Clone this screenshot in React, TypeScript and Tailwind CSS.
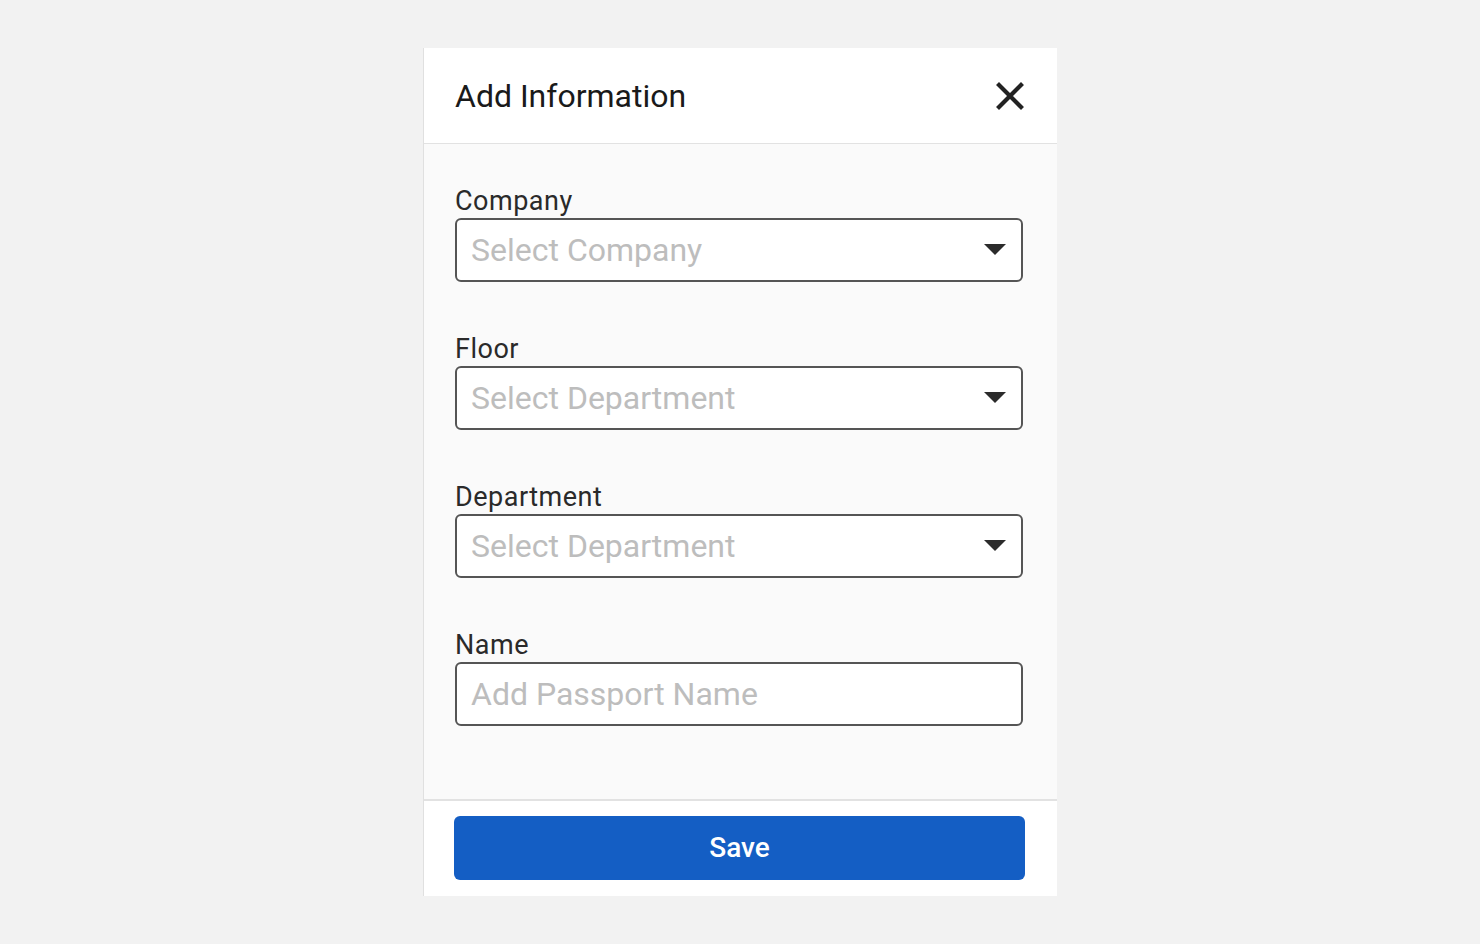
import { useState } from "react";

const fields = [
  { label: "Company", placeholder: "Select Company", select: true },
  { label: "Floor", placeholder: "Select Department", select: true },
  { label: "Department", placeholder: "Select Department", select: true },
  { label: "Name", placeholder: "Add Passport Name", select: false },
];

function Caret() {
  return (
    <svg width="22" height="12" viewBox="0 0 22 12" className="shrink-0">
      <path d="M0 0 L22 0 L11 11 Z" fill="#2b2b2b" />
    </svg>
  );
}

export default function App() {
  const [name, setName] = useState("");

  return (
    <main
      className="min-h-screen bg-[#f2f2f2] pt-12"
      style={{ fontFamily: "Roboto, 'Noto Sans', sans-serif" }}
    >
      <div className="mx-auto flex h-[848px] w-[634px] flex-col border-l border-[#e0e0e0] bg-[#fafafa]">
        {/* Header */}
        <header className="flex h-[96px] shrink-0 items-center justify-between border-b border-[#e2e2e2] bg-white pl-[31px] pr-[31px]">
          <h2 className="text-[32px] leading-none text-[#1a1a1a]">Add Information</h2>
          <button className="flex size-8 items-center justify-center">
            <svg width="28" height="28" viewBox="0 0 28 28">
              <path
                d="M3 3 L25 25 M25 3 L3 25"
                stroke="#222"
                strokeWidth="4.2"
                strokeLinecap="square"
              />
            </svg>
          </button>
        </header>

        {/* Form */}
        <div className="flex flex-1 flex-col gap-[50px] pl-[31px] pr-[34px] pt-10">
          {fields.map((f) => (
            <div key={f.label} className="flex flex-col">
              <label className="text-[27px] leading-[34px] tracking-[0.5px] text-[#2a2a2a]">
                {f.label}
              </label>
              {f.select ? (
                <div className="flex h-16 items-center justify-between rounded-md border-2 border-[#555] bg-white pl-[14px] pr-[15px]">
                  <span className="text-[32px] text-[#bdbdbd]">{f.placeholder}</span>
                  <Caret />
                </div>
              ) : (
                <input
                  value={name}
                  onChange={(e) => setName(e.target.value)}
                  placeholder={f.placeholder}
                  className="h-16 rounded-md border-2 border-[#555] bg-white pl-[14px] text-[32px] text-[#222] outline-none placeholder:text-[#bdbdbd]"
                />
              )}
            </div>
          ))}
        </div>

        {/* Footer */}
        <footer className="shrink-0 border-t-2 border-[#e2e2e2] bg-white pb-4 pl-[30px] pr-8 pt-[15px]">
          <button className="h-16 w-full rounded-md bg-[#145ec4] text-[28px] font-medium text-white">
            Save
          </button>
        </footer>
      </div>
    </main>
  );
}
